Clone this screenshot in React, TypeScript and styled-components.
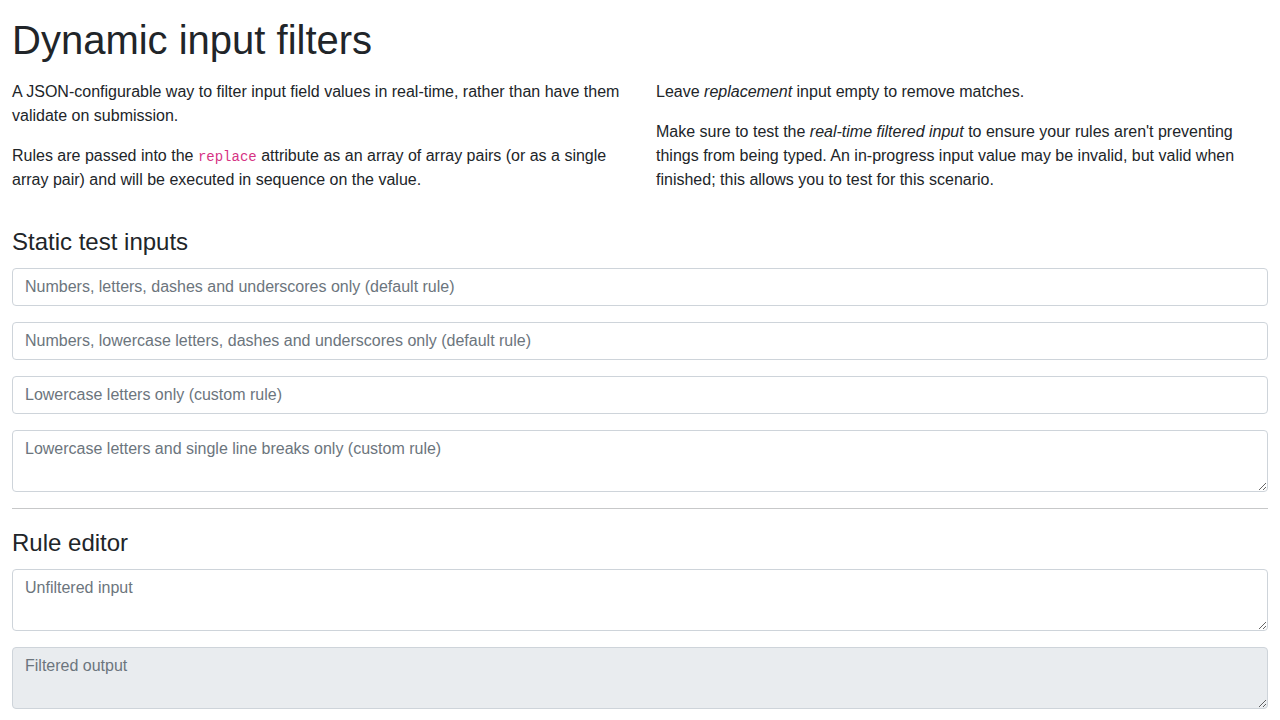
import React from "react";
import styled, { createGlobalStyle } from "styled-components";

const GlobalStyle = createGlobalStyle`
  *, *::before, *::after { box-sizing: border-box; }
  body {
    margin: 0;
    font-family: "Liberation Sans", Arial, sans-serif;
    font-size: 16px;
    line-height: 1.5;
    color: #212529;
    background: #fff;
  }
`;

const Page = styled.main`
  padding: 16px 12px;
`;

const Title = styled.h1`
  margin: 0 0 16px;
  font-size: 40px;
  font-weight: 500;
  line-height: 1.2;
`;

const Intro = styled.div`
  display: grid;
  grid-template-columns: 1fr 1fr;
  column-gap: 32px;
  margin-bottom: 16px;
`;

const Column = styled.div``;

const Para = styled.p`
  margin: 0 0 16px;
`;

const Code = styled.code`
  font-family: "Liberation Mono", "DejaVu Sans Mono", monospace;
  font-size: 14px;
  color: #d63384;
`;

const SectionTitle = styled.h4`
  margin: 0 0 8px;
  font-size: 24px;
  font-weight: 400;
  line-height: 1.5;
`;

const fieldCss = `
  display: block;
  width: 100%;
  margin: 0 0 16px;
  padding: 6px 12px;
  font-family: "Liberation Sans", Arial, sans-serif;
  font-size: 16px;
  line-height: 1.5;
  color: #212529;
  background: #fff;
  border: 1px solid #ced4da;
  border-radius: 4px;
  outline: none;
  &::placeholder { color: #6c757d; opacity: 1; }
  &:disabled { background: #e9ecef; }
`;

const Input = styled.input`
  ${fieldCss}
  height: 38px;
`;

const TextArea = styled.textarea`
  ${fieldCss}
  height: 62px;
  resize: vertical;
`;

const Rule = styled.hr`
  margin: 0 0 16px;
  border: 0;
  border-top: 1px solid #212529;
  opacity: 0.25;
`;

export default function App() {
  return (
    <>
      <GlobalStyle />
      <Page>
        <Title>Dynamic input filters</Title>
        <Intro>
          <Column>
            <Para>
              A JSON-configurable way to filter input field values in real-time, rather than have them
              validate on submission.
            </Para>
            <Para>
              Rules are passed into the <Code>replace</Code> attribute as an array of array pairs (or as a
              single array pair) and will be executed in sequence on the value.
            </Para>
          </Column>
          <Column>
            <Para>
              Leave <em>replacement</em> input empty to remove matches.
            </Para>
            <Para>
              Make sure to test the <em>real-time filtered input</em> to ensure your rules aren't
              preventing things from being typed. An in-progress input value may be invalid, but valid
              when finished; this allows you to test for this scenario.
            </Para>
          </Column>
        </Intro>

        <SectionTitle>Static test inputs</SectionTitle>
        <Input placeholder="Numbers, letters, dashes and underscores only (default rule)" />
        <Input placeholder="Numbers, lowercase letters, dashes and underscores only (default rule)" />
        <Input placeholder="Lowercase letters only (custom rule)" />
        <TextArea rows={2} placeholder="Lowercase letters and single line breaks only (custom rule)" />

        <Rule />

        <SectionTitle>Rule editor</SectionTitle>
        <TextArea rows={2} placeholder="Unfiltered input" />
        <TextArea rows={2} placeholder="Filtered output" disabled />
      </Page>
    </>
  );
}
